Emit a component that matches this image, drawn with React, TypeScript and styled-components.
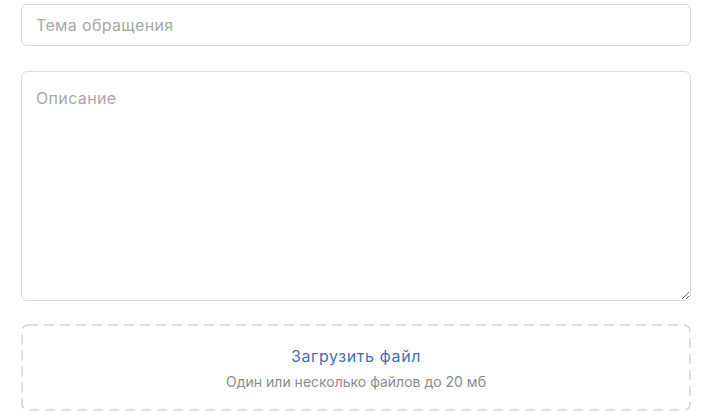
import styled, { createGlobalStyle } from 'styled-components';

const GlobalStyle = createGlobalStyle`
	html, body {
		margin: 0;
		padding: 0;
		background: #ffffff;
	}
	body {
		font-family: Inter, 'Noto Sans', 'Liberation Sans', sans-serif;
	}
	* {
		box-sizing: border-box;
	}
`;

const dashedFrame =
	"data:image/svg+xml;utf8," +
	encodeURIComponent(
		`<svg xmlns="http://www.w3.org/2000/svg" width="100%" height="100%"><rect x="1" y="1" width="calc(100% - 2px)" height="calc(100% - 2px)" rx="6" ry="6" fill="none" stroke="#d4d4d4" stroke-width="1.5" stroke-dasharray="10 6"/></svg>`,
	);

const Form = styled.form`
	width: 670px;
	margin: 4px 0 0 21px;
	display: flex;
	flex-direction: column;
`;

const Field = styled.input`
	width: 100%;
	height: 42px;
	padding: 0 14px;
	border: 1px solid #d9d9d9;
	border-radius: 6px;
	font-family: inherit;
	font-size: 16px;
	letter-spacing: 0.35px;
	color: #333;
	outline: none;

	&::placeholder {
		color: #a8a8a8;
	}
`;

const Area = styled.textarea`
	width: 100%;
	height: 230px;
	margin-top: 25px;
	padding: 15px 14px;
	border: 1px solid #d9d9d9;
	border-radius: 6px;
	font-family: inherit;
	font-size: 16px;
	letter-spacing: 0.35px;
	line-height: 22px;
	color: #333;
	outline: none;
	resize: vertical;
	display: block;

	&::placeholder {
		color: #a8a8a8;
	}
`;

const DropZone = styled.label`
	margin-top: 23px;
	height: 87px;
	display: flex;
	flex-direction: column;
	align-items: center;
	justify-content: center;
	gap: 7px;
	padding-top: 1px;
	background-image: url("${dashedFrame}");
	background-repeat: no-repeat;
	cursor: pointer;
`;

const UploadLink = styled.span`
	font-size: 16px;
	letter-spacing: 0.6px;
	color: #3f70b8;
`;

const UploadHint = styled.span`
	font-size: 14px;
	color: #8a8a8a;
`;

const HiddenInput = styled.input`
	display: none;
`;

function App() {
	return (
		<>
			<GlobalStyle />
			<Form onSubmit={(e) => e.preventDefault()}>
				<Field type="text" placeholder="Тема обращения" />
				<Area placeholder="Описание" />
				<DropZone>
					<HiddenInput type="file" multiple />
					<UploadLink>Загрузить файл</UploadLink>
					<UploadHint>Один или несколько файлов до 20 мб</UploadHint>
				</DropZone>
			</Form>
		</>
	);
}

export default App;
